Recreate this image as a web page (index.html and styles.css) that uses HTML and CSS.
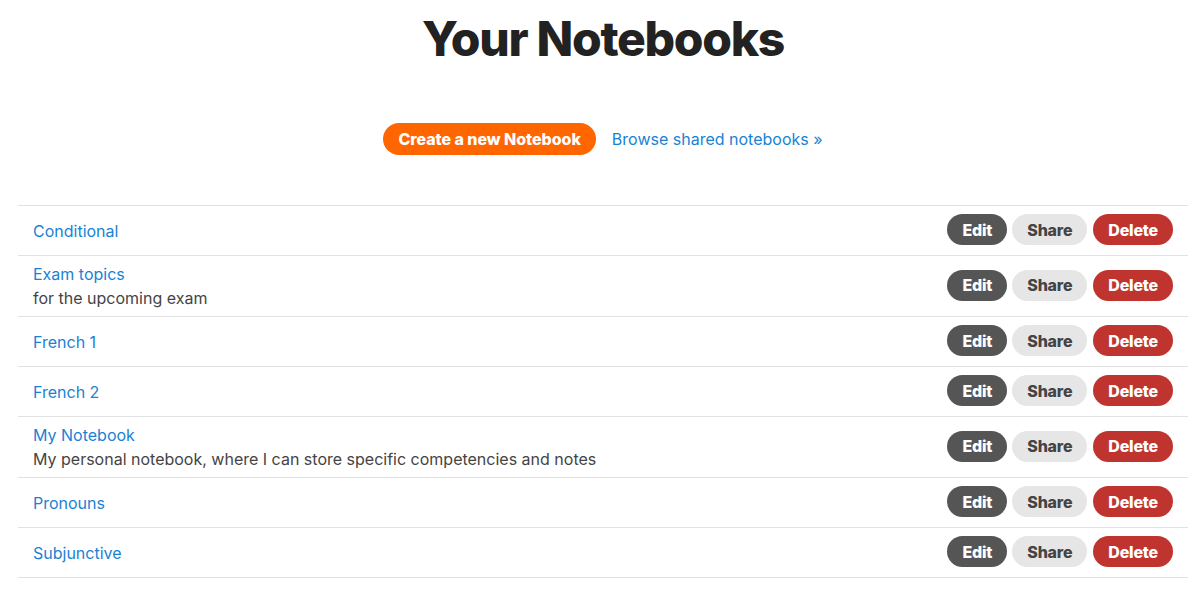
FILE: index.html
```html
<!DOCTYPE html>
<html lang="en">
<head>
<meta charset="utf-8">
<title>Your Notebooks</title>
<link rel="stylesheet" href="styles.css">
</head>
<body>
<main class="page">
  <h1 class="title">Your Notebooks</h1>
  <div class="actions">
    <a class="btn-create" href="#">Create a new Notebook</a>
    <a class="link-browse" href="#">Browse shared notebooks »</a>
  </div>
  <ul class="notebooks">
    <li class="row">
      <div class="info"><a class="name" href="#">Conditional</a></div>
      <div class="btns"><a class="btn btn-edit" href="#">Edit</a><a class="btn btn-share" href="#">Share</a><a class="btn btn-delete" href="#">Delete</a></div>
    </li>
    <li class="row">
      <div class="info"><a class="name" href="#">Exam topics</a><p class="desc">for the upcoming exam</p></div>
      <div class="btns"><a class="btn btn-edit" href="#">Edit</a><a class="btn btn-share" href="#">Share</a><a class="btn btn-delete" href="#">Delete</a></div>
    </li>
    <li class="row">
      <div class="info"><a class="name" href="#">French 1</a></div>
      <div class="btns"><a class="btn btn-edit" href="#">Edit</a><a class="btn btn-share" href="#">Share</a><a class="btn btn-delete" href="#">Delete</a></div>
    </li>
    <li class="row">
      <div class="info"><a class="name" href="#">French 2</a></div>
      <div class="btns"><a class="btn btn-edit" href="#">Edit</a><a class="btn btn-share" href="#">Share</a><a class="btn btn-delete" href="#">Delete</a></div>
    </li>
    <li class="row">
      <div class="info"><a class="name" href="#">My Notebook</a><p class="desc">My personal notebook, where I can store specific competencies and notes</p></div>
      <div class="btns"><a class="btn btn-edit" href="#">Edit</a><a class="btn btn-share" href="#">Share</a><a class="btn btn-delete" href="#">Delete</a></div>
    </li>
    <li class="row">
      <div class="info"><a class="name" href="#">Pronouns</a></div>
      <div class="btns"><a class="btn btn-edit" href="#">Edit</a><a class="btn btn-share" href="#">Share</a><a class="btn btn-delete" href="#">Delete</a></div>
    </li>
    <li class="row">
      <div class="info"><a class="name" href="#">Subjunctive</a></div>
      <div class="btns"><a class="btn btn-edit" href="#">Edit</a><a class="btn btn-share" href="#">Share</a><a class="btn btn-delete" href="#">Delete</a></div>
    </li>
  </ul>
</main>
</body>
</html>
```
FILE: styles.css
```css
* { box-sizing: border-box; }
html, body { margin: 0; padding: 0; background: #fff; }
body {
  font-family: Inter, "Noto Sans", "Liberation Sans", sans-serif;
  font-size: 16px;
  line-height: 24px;
  color: #444;
}
a { text-decoration: none; }
.page {
  margin: 0 10px 0 18px;
  display: flex;
  flex-direction: column;
  align-items: center;
}
.title {
  margin: 12px 0 0;
  font-size: 48px;
  line-height: 54px;
  font-weight: 800;
  letter-spacing: -1.3px;
  color: #222;
}
.actions {
  margin-top: 57px;
  display: flex;
  align-items: center;
  gap: 16px;
}
.btn-create {
  display: inline-flex;
  align-items: center;
  height: 32px;
  padding: 0 15px;
  border-radius: 16px;
  background: #ff6600;
  color: #fff;
  font-weight: 800;
  font-size: 16px;
  letter-spacing: -0.05px;
}
.link-browse { color: #1a82d4; }
.notebooks {
  list-style: none;
  margin: 50px 0 0;
  padding: 0;
  width: 100%;
  border-top: 1px solid #e2e2e2;
}
.row {
  display: flex;
  align-items: center;
  justify-content: space-between;
  padding: 6px 15px;
  min-height: 50px;
  border-bottom: 1px solid #e2e2e2;
}
.name { color: #1a82d4; display: block; }
.desc { margin: 0; color: #444; }
.btns { display: flex; gap: 5px; margin-bottom: 2px; }
.btn {
  display: inline-flex;
  align-items: center;
  height: 31px;
  padding: 0 15px;
  border-radius: 16px;
  font-weight: 800;
  font-size: 16px;
  letter-spacing: -0.2px;
}
.btn-edit { background: #555; color: #fff; }
.btn-share { background: #e6e6e6; color: #444; }
.btn-delete { background: #c0342f; color: #fff; margin-left: 1px; }
```
